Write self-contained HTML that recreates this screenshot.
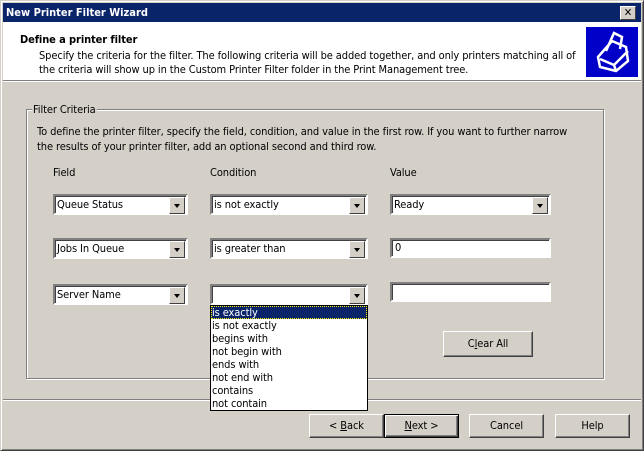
<!DOCTYPE html>
<html><head><style>
*{margin:0;padding:0;box-sizing:border-box}
body{width:644px;height:451px;overflow:hidden;background:#d4d0c8;font-family:Tahoma,"DejaVu Sans Condensed","Liberation Sans",sans-serif;font-size:11px;color:#000;position:relative;letter-spacing:-0.1px}
.a{position:absolute;white-space:nowrap}
.win{position:absolute;left:0;top:0;width:644px;height:451px;border:1px solid;border-color:#d4d0c8 #404040 #404040 #d4d0c8;box-shadow:inset 1px 1px #fff,inset -1px -1px #808080}
.title{position:absolute;left:3px;top:3px;width:638px;height:19px;background:#0a246a;color:#fff;font-weight:bold;font-size:11px;line-height:19px;padding-left:3px;letter-spacing:0}
.close{position:absolute;right:5px;top:3px;width:16px;height:14px;background:#d4d0c8;border:1px solid;border-color:#fff #404040 #404040 #fff;color:#000;font-size:11px;line-height:11px;text-align:center;font-weight:bold}
.hdr{position:absolute;left:3px;top:22px;width:638px;height:59px;background:#fff;border-bottom:1px solid #808080;box-shadow:0 1px #fff}
.cb{position:absolute;height:21px;background:#fff;border:2px solid;border-color:#808080 #fff #fff #808080;box-shadow:inset 1px 1px #404040;padding-left:2px;line-height:17px}
.cb .btn{position:absolute;right:1px;top:1px;width:16px;height:17px;background:#d4d0c8;border:1px solid;border-color:#fff #404040 #404040 #fff}
.cb .btn:after{content:"";position:absolute;left:4px;top:6px;border-left:3.5px solid transparent;border-right:3.5px solid transparent;border-top:4px solid #000}
.tb{position:absolute;height:20px;background:#fff;border:2px solid;border-color:#808080 #fff #fff #808080;box-shadow:inset 1px 1px #404040;padding-left:3px;line-height:16px}
.b{position:absolute;height:24px;background:#d4d0c8;border:1px solid;border-color:#fff #404040 #404040 #fff;box-shadow:inset -1px -1px #808080;text-align:center;line-height:22px}
.grp{position:absolute;left:26px;top:109px;width:578px;height:270px;border:1px solid #808080;box-shadow:1px 1px #fff,inset 1px 1px #fff}
.dd{position:absolute;left:210px;top:305px;width:158px;height:106px;background:#fff;border:1px solid #000}
.dd div{height:13px;line-height:13px;padding-left:1px}
</style></head><body>
<div class="win"></div>
<div class="title">New Printer Filter Wizard<div class="close">✕</div></div>
<div class="hdr"></div>
<div class="a" style="left:20px;top:33px;font-weight:bold">Define a printer filter</div>
<div class="a" style="left:39px;top:49px">Specify the criteria for the filter. The following criteria will be added together, and only printers matching all of</div>
<div class="a" style="left:39px;top:63px">the criteria will show up in the Custom Printer Filter folder in the Print Management tree.</div>
<svg class="a" style="left:586px;top:27px" width="52" height="50" viewBox="0 0 52 50">
<rect width="52" height="50" fill="#0000c8"/>
<g fill="none" stroke="#fff" stroke-width="2.5">
<path d="M12 30 L26 14 L40 20 L42 34 L30 44 L14 40 Z"/>
<path d="M14 32 L28 38 L42 24"/><path d="M28 38 L30 44"/>
<path d="M20 24 L28 6 L36 10 L34 22"/>
</g></svg>
<div class="grp"></div>
<div class="a" style="left:32px;top:103px;background:#d4d0c8;padding:0 1px">Filter Criteria</div>
<div class="a" style="left:37px;top:125px">To define the printer filter, specify the field, condition, and value in the first row. If you want to further narrow</div>
<div class="a" style="left:37px;top:140px">the results of your printer filter, add an optional second and third row.</div>
<div class="a" style="left:53px;top:166px">Field</div>
<div class="a" style="left:210px;top:166px">Condition</div>
<div class="a" style="left:390px;top:166px">Value</div>
<div class="cb" style="left:53px;top:194px;width:135px">Queue Status<div class="btn"></div></div>
<div class="cb" style="left:210px;top:194px;width:158px">is not exactly<div class="btn"></div></div>
<div class="cb" style="left:390px;top:194px;width:161px">Ready<div class="btn"></div></div>
<div class="cb" style="left:53px;top:238px;width:135px">Jobs In Queue<div class="btn"></div></div>
<div class="cb" style="left:210px;top:238px;width:158px">is greater than<div class="btn"></div></div>
<div class="tb" style="left:390px;top:238px;width:161px">0</div>
<div class="cb" style="left:53px;top:284px;width:135px">Server Name<div class="btn"></div></div>
<div class="cb" style="left:210px;top:284px;width:158px"><div class="btn"></div></div>
<div class="tb" style="left:390px;top:282px;width:161px"></div>
<div class="b" style="left:443px;top:331px;width:90px;height:26px;line-height:24px">C<u>l</u>ear All</div>
<div class="a" style="left:3px;top:399px;width:638px;height:2px;border-top:1px solid #808080;border-bottom:1px solid #fff"></div>
<div class="dd">
<div style="background:#0a246a;color:#fff;outline:1px dotted #ff0;outline-offset:-1px">is exactly</div>
<div>is not exactly</div><div>begins with</div><div>not begin with</div><div>ends with</div><div>not end with</div><div>contains</div><div>not contain</div>
</div>
<div class="b" style="left:309px;top:414px;width:75px">&lt; <u>B</u>ack</div>
<div class="b" style="left:384px;top:414px;width:75px;border:1px solid #000;box-shadow:inset 1px 1px #fff,inset -1px -1px #404040,inset -2px -2px #808080"><u>N</u>ext &gt;</div>
<div class="b" style="left:469px;top:414px;width:75px">Cancel</div>
<div class="b" style="left:555px;top:414px;width:75px">Help</div>
</body></html>
